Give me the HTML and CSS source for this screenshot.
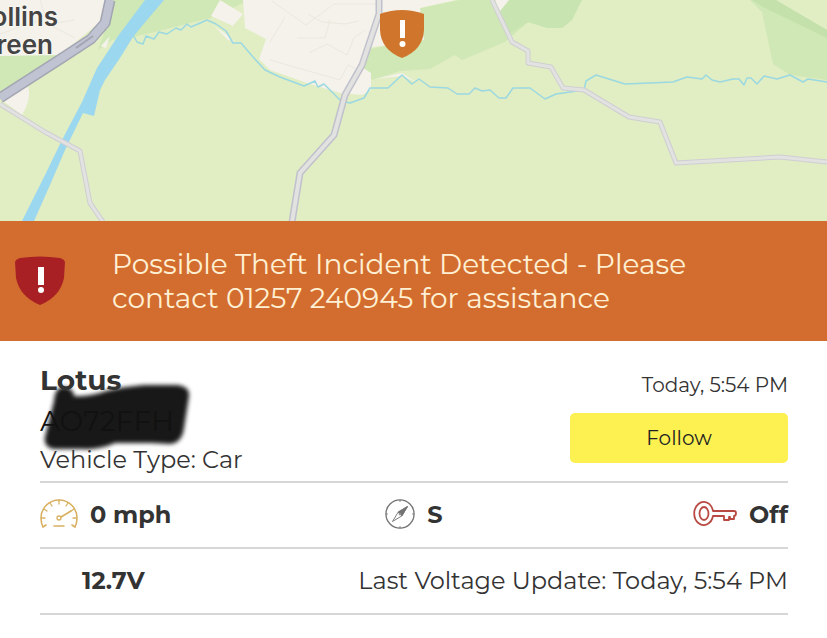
FILE: index.html
```html
<!DOCTYPE html>
<html lang="en">
<head>
    <meta charset="utf-8">
    <meta name="viewport" content="width=device-width, initial-scale=1">
    <title>Vehicle tracker</title>
    <link rel="stylesheet" href="styles.css">
</head>
<body>
    <div class="map">
        <svg class="map-tiles" viewBox="0 0 827 221" preserveAspectRatio="xMidYMid slice" aria-hidden="true">
            <rect width="827" height="221" fill="#e1edc3"/>

            <!-- woods -->
            <g fill="#d0e8b6">
                <path d="M0 55H62L0 92Z"/>
                <path d="M113 0H250L210 18L150 33L133 37L112 40L98 50L105 30Z"/>
                <path d="M420 8L460 0H582L570 20L553 28L528 22L505 42L462 60L455 55L430 69L400 71L372 80L360 62L366 50L400 43Z"/>
                <path d="M750 0H775L827 30V80L790 75L773 64L762 12Z"/>
            </g>
            <path d="M509 0H582L572 20L562 28H547L528 22L509 34L500 12Z" fill="#c8e4b0"/>
            <path d="M776 0L827 30V38L765 8L752 0Z" fill="#c4e0ab"/>

            <!-- built up areas -->
            <g fill="#f4f2ea">
                <path d="M0 0H106L100 22L60 55L0 56Z"/>
                <path d="M3 101L28 86Q32 98 22 115Z"/>
                <path d="M220 0L243 14L233 26L211 16Z"/>
                <path d="M243 0H456L420 8L424 40L366 48L360 66L371 73V90L362 95L340 93L310 84L270 70L259 59L266 39L245 28Z"/>
                <path d="M495 0H509L500 11Z"/>
                <path d="M101 46L110 36L106 48Z"/>
                <path d="M214 26L226 34L235 42L228 40Z"/>
                <path d="M375 79L402 73L416 82L402 76Z"/>
            </g>
            <g fill="none" stroke="#ebe8df">
                <path d="M272 1L306 25L334 4H376M285 17L270 42M297 38H325L330 20M309 53L327 44L347 55L354 38L365 30M308 14L322 22L345 24L359 21M270 60L340 80L348 65L362 72M0 34L40 20L75 38M40 0L48 24L75 20"/>
            </g>

            <!-- river and brooks -->
            <path d="M145 0H164L147 20L133 37L120 58L105 80L100 90L94 116L83 113L65 150L50 185L34 221H22L45 175L62 140L82 102L97 68L118 36Z" fill="#9bd7ef"/>
            <path d="M133 35L137 42L143 44L146 36L154 39L159 32L167 34L176 28L181 30L187 24L191 27L207 20L216 24L226 31L233 43L241 43L253 57L265 70L280 77L304 86L315 81L318 87L324 84L341 101L350 103L364 98L370 88H388L402 75L412 84L419 79L430 87L448 88L457 94H469L475 88L482 91L490 90L499 98H506L513 88H530L545 99L556 94L584 90L586 81L596 75L625 84L673 82L687 77L702 79L706 75L712 80L720 82L733 79L739 79L744 85L747 78H751L757 84L764 76L777 79L790 75L803 82L808 79L827 82" fill="none" stroke="#9ad8e2" stroke-width="1.5" stroke-linejoin="round"/>

            <!-- roads, a casing under each lighter line -->
            <g fill="none" stroke-linejoin="round">
                <path d="M110 0L105 23L91 39L62 58L0 98" stroke="#a3a5b2" stroke-width="11"/>
                <path d="M110 0L105 23L91 39L62 58L0 98" stroke="#bfc3d2" stroke-width="8"/>
                <path d="M93 36L76 48" stroke="#a3a5b2" stroke-width="2"/>
                <g stroke="#cfced3">
                    <path d="M0 104L45 132L80 151L90 203L103 222" stroke-width="5"/>
                    <path d="M492 0L512 42L528 51V63L551 67L563 88L584 90L629 117L660 122L676 163L780 157L827 162" stroke-width="5"/>
                    <path d="M379 0V14L362 65L345 95L334 135L300 173L292 222" stroke-width="7" stroke="#c0c1cd"/>
                </g>
                <g stroke="#e2e3e1">
                    <path d="M0 104L45 132L80 151L90 203L103 222" stroke-width="3"/>
                    <path d="M492 0L512 42L528 51V63L551 67L563 88L584 90L629 117L660 122L676 163L780 157L827 162" stroke-width="3"/>
                    <path d="M379 0V14L362 65L345 95L334 135L300 173L292 222" stroke-width="4"/>
                </g>
            </g>

            <g class="place">
                <text x="58" y="26">ollins</text>
                <text x="53" y="54">reen</text>
            </g>
        </svg>
        <svg class="marker" viewBox="0 0 44 48" role="img" aria-label="Vehicle alert">
            <path d="M0 4Q22-4 44 4V20Q43 40 22 48Q1 40 0 20Z" fill="#d0762c"/>
            <path d="M20 10H25V28H20Z" fill="#fff"/>
            <circle cx="22.500" cy="34" r="3" fill="#fff"/>
        </svg>
    </div>

    <div class="alert" role="alert">
        <svg class="alert-icon" viewBox="0 0 52 50" aria-hidden="true">
            <path d="M1 6Q2 3 6 2Q26-1 46 2Q50 3 51 6L50 22Q46 41 26 49Q6 41 2 22Z" fill="#a82023"/>
            <path d="M24 11H30V29H24Z" fill="#fff"/>
            <circle cx="27" cy="34" r="3" fill="#fff"/>
        </svg>
        <p>Possible Theft Incident Detected - Please contact 01257 240945 for assistance</p>
    </div>

    <div class="panel">
        <div class="row vehicle">
            <div>
                <h1>Lotus</h1>
                <div class="plate">
                    AO72FFH
                    <svg class="scribble" viewBox="0 0 150 70" aria-hidden="true">
                        <path d="M14 18Q15 3 25 4Q34 6 34 13Q50 14 66 8Q80 4 104 2H136Q150 3 149 13L144 45Q142 60 130 61L112 60H75Q60 67 42 66H14Q3 64 5 54Z"/>
                    </svg>
                </div>
                <div class="type">Vehicle Type: Car</div>
            </div>
            <div class="actions">
                <div class="time">Today, 5:54 PM</div>
                <button type="button" class="follow">Follow</button>
            </div>
        </div>

        <div class="row stats">
            <div class="stat">
                <svg width="38" height="32" viewBox="0 0 38 32" fill="none" stroke="#d9b060" stroke-width="1.6" stroke-linecap="round" aria-hidden="true">
                    <path d="M6 27L3 29Q1 25 1 20A18 18 0 0 1 37 20Q37 25 35 29L32 27"/>
                    <path d="M19 2V6M10 5L12 8M28 5L26 8M4 11L7 13M34 11L31 13M2 20H5M33 20H36" stroke-width="1.3"/>
                    <path d="M14 28H24M21 19L31 13"/>
                    <circle cx="19" cy="20" r="2" stroke-width="1.3"/>
                </svg>
                <strong>0 mph</strong>
            </div>
            <div class="stat">
                <svg width="30" height="30" viewBox="0 0 32 32" fill="none" stroke="#737373" stroke-width="1" aria-hidden="true">
                    <circle cx="16" cy="16" r="15" stroke-width="1.4"/>
                    <path d="M16 1V3M16 29V31M1 16H3M29 16H31"/>
                    <path d="M24 8L14 14L8 24L18 18Z"/>
                    <path d="M24 8L14 14L18 18Z" fill="#737373"/>
                    <circle cx="16" cy="16" r="1" fill="#fff"/>
                </svg>
                <strong>S</strong>
            </div>
            <div class="stat">
                <svg width="44" height="26" viewBox="0 0 44 26" fill="none" stroke="#b84a43" stroke-width="1.8" stroke-linejoin="round" aria-hidden="true">
                    <path d="M20 10H41Q43 10 43 12Q43 15 41 15V18H37V16H36V19H31V15H20A9.500 11.500 0 1 1 20 10Z"/>
                    <ellipse cx="11" cy="12.500" rx="4.500" ry="6.500"/>
                </svg>
                <strong>Off</strong>
            </div>
        </div>

        <div class="row">
            <strong class="voltage">12.7V</strong>
            <span>Last Voltage Update: Today, 5:54 PM</span>
        </div>
    </div>
</body>
</html>
```
FILE: styles.css
```css
* {
    box-sizing: border-box;
}
body {
    margin: 0;
    background: #fff;
    color: #333;
    font-family: Montserrat, Inter, "Open Sans", sans-serif;
    font-size: 24px;
}
h1, p {
    margin: 0;
}
svg {
    display: block;
    flex-shrink: 0;
}

.map {
    position: relative;
    height: 221px;
    overflow: hidden;
    background: #e1edc3;
}
.map-tiles {
    width: 100%;
    height: 100%;
}
.place {
    font-family: Inter, sans-serif;
    font-size: 26px;
    font-weight: 600;
    text-anchor: end;
    fill: #444;
    stroke: #f8f6f0;
    stroke-width: 2px;
    paint-order: stroke;
}
.marker {
    position: absolute;
    top: 10px;
    left: calc(50% - 34px);
    width: 44px;
    height: 48px;
}

.alert {
    display: flex;
    align-items: center;
    gap: 46px;
    min-height: 120px;
    padding: 0 100px 0 14px;
    background: #d36d2f;
    color: #fff0d4;
    font-size: 28px;
    line-height: 34px;
}
.alert-icon {
    width: 52px;
    height: 50px;
}

.panel {
    padding: 0 39px 0 40px;
}
.row {
    display: flex;
    align-items: center;
    justify-content: space-between;
    min-height: 66px;
    padding-bottom: 2px;
    border-bottom: 2px solid #d6d6d6;
}
.row strong {
    font-weight: 700;
}

.vehicle {
    align-items: flex-start;
    min-height: 142px;
    padding-top: 19px;
}
.vehicle h1 {
    font-size: 28px;
    font-weight: 700;
    line-height: 40px;
}
.plate {
    position: relative;
    color: #111;
    font-size: 28px;
    line-height: 42px;
}
.scribble {
    position: absolute;
    top: -17px;
    left: 0;
    z-index: -1;
    width: 150px;
    height: 70px;
    fill: #181818;
    filter: blur(2px);
}
.type {
    line-height: 36px;
}

.actions {
    width: 218px;
}
.time {
    font-size: 20px;
    line-height: 50px;
    text-align: right;
    white-space: nowrap;
}
.follow {
    width: 100%;
    height: 50px;
    margin-top: 3px;
    border: 0;
    border-radius: 5px;
    background: #fcf151;
    color: #222;
    font: inherit;
    font-size: 20px;
}

.stats {
    display: grid;
    grid-template-columns: 1fr auto 1fr;
}
.stat {
    display: flex;
    align-items: center;
    gap: 12px;
}
.stat:last-child {
    justify-content: flex-end;
}
.voltage {
    padding-left: 42px;
}
```
